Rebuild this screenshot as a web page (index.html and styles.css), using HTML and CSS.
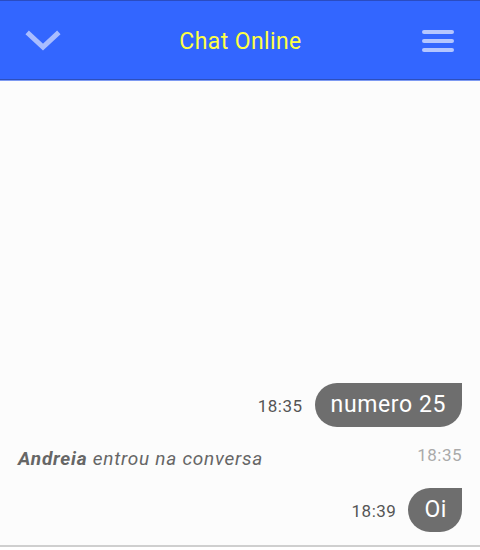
FILE: index.html
```html
<!DOCTYPE html>
<html>
<head>
<meta charset="utf-8">
<link rel="stylesheet" href="styles.css">
</head>
<body>
<div class="app">
  <header class="topbar">
    <svg class="icon chevron" width="36" height="24" viewBox="0 0 36 24">
      <path d="M4 5 L18 18 L32 5" fill="none" stroke="#a9bdff" stroke-width="5" stroke-linecap="square"/>
    </svg>
    <h1 class="title">Chat Online</h1>
    <svg class="icon menu" width="36" height="26" viewBox="0 0 36 26">
      <g stroke="#b4c6ff" stroke-width="4" stroke-linecap="round">
        <line x1="4" y1="4" x2="32" y2="4"/>
        <line x1="4" y1="13" x2="32" y2="13"/>
        <line x1="4" y1="22" x2="32" y2="22"/>
      </g>
    </svg>
  </header>
  <main class="messages">
    <div class="row mine">
      <span class="time">18:35</span>
      <div class="bubble">numero 25</div>
    </div>
    <div class="system">
      <span class="system-text"><b>Andreia</b> entrou na conversa</span>
      <span class="system-time">18:35</span>
    </div>
    <div class="row mine">
      <span class="time">18:39</span>
      <div class="bubble short">Oi</div>
    </div>
  </main>
  <footer class="bottom"></footer>
</div>
</body>
</html>
```
FILE: styles.css
```css
html, body {
  margin: 0;
  padding: 0;
  background: #fcfcfc;
  font-family: Roboto, "Liberation Sans", sans-serif;
}
.app {
  width: 480px;
  height: 550px;
  display: flex;
  flex-direction: column;
  overflow: hidden;
}
.topbar {
  flex: 0 0 auto;
  height: 78px;
  background: #3366ff;
  border-top: 1px solid #2a4cc2;
  border-bottom: 1px solid #2d4fbd;
  box-shadow: 0 1px 0 #7d9af2;
  display: flex;
  align-items: center;
  justify-content: space-between;
  padding: 0 24px 0 25px;
}
.icon {
  display: block;
}
.chevron {
  margin-top: 2px;
}
.menu {
  margin-top: 2px;
}
.title {
  margin: 0;
  font-weight: 400;
  font-size: 23px;
  letter-spacing: 0.4px;
  color: #ffff44;
  margin-top: 2px;
}
.messages {
  flex: 1 1 auto;
  display: flex;
  flex-direction: column;
  justify-content: flex-end;
  padding: 0 18px 13px 18px;
}
.row {
  display: flex;
  align-items: center;
  justify-content: flex-end;
  gap: 12px;
}
.time {
  font-size: 17px;
  letter-spacing: 0.5px;
  color: #555555;
  margin-top: 2px;
}
.bubble {
  height: 44px;
  line-height: 44px;
  padding: 0 16px;
  background: #6e6e6e;
  color: #ffffff;
  font-size: 23px;
  letter-spacing: 0.6px;
  border-radius: 22px 0 22px 22px;
}
.bubble.short {
  padding: 0 15px 0 16px;
}
.system {
  display: flex;
  align-items: center;
  justify-content: space-between;
  height: 25px;
  margin: 18px 0;
}
.system-text {
  font-style: italic;
  font-size: 19px;
  letter-spacing: 0.75px;
  color: #666666;
  margin-top: 2px;
}
.system-text b {
  font-weight: 700;
}
.system-time {
  font-size: 17px;
  letter-spacing: 0.5px;
  color: #aaaaaa;
  margin-top: -5px;
}
.bottom {
  flex: 0 0 auto;
  height: 3px;
  border-top: 2px solid #cfcfcf;
  background: #ffffff;
}
```
